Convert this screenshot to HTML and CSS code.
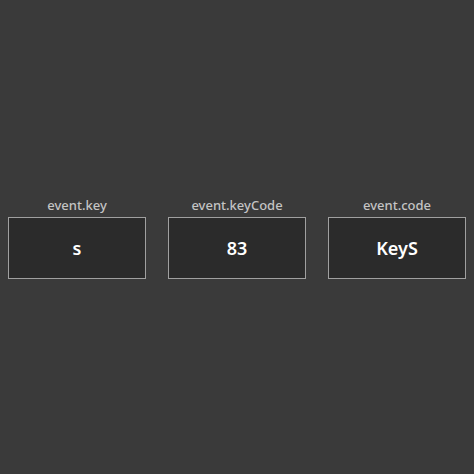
FILE: index.html
```html
<!DOCTYPE html>
<html lang="en">
<head>
    <meta charset="UTF-8">
    <meta name="viewport" content="width=device-width, initial-scale=1.0">
    <title>Key Codes</title>
    <link rel="stylesheet" href="styles.css">
</head>
<body>

    <!-- Key info cards -->
    <div class="key-row">
        <div class="key-card">
            <span class="key-label">event.key</span>
            <div class="key-value">s</div>
        </div>
        <div class="key-card">
            <span class="key-label">event.keyCode</span>
            <div class="key-value">83</div>
        </div>
        <div class="key-card">
            <span class="key-label">event.code</span>
            <div class="key-value">KeyS</div>
        </div>
    </div>

</body>
</html>
```

FILE: styles.css
```css
html, body {
    height: 100%;
}

body {
    font-family: "Noto Sans", "Open Sans", sans-serif;
    background-color: #3a3a3a;
    margin: 0;
    padding: 0 8px;
    display: flex;
    align-items: center;
    justify-content: center;
}

.key-row {
    display: flex;
    gap: 22px;
    width: 100%;
    margin-top: 1px;
}

.key-card {
    flex: 1;
    display: flex;
    flex-direction: column;
    align-items: center;
}

.key-label {
    color: #c4c4c4;
    font-size: 13px;
    font-weight: 500;
    line-height: 16px;
    margin-bottom: 4px;
}

.key-value {
    box-sizing: border-box;
    width: 100%;
    height: 62px;
    background-color: #2b2b2b;
    border: 1px solid #a0a0a0;
    color: #ffffff;
    font-size: 18px;
    font-weight: 600;
    display: flex;
    align-items: center;
    justify-content: center;
}
```
